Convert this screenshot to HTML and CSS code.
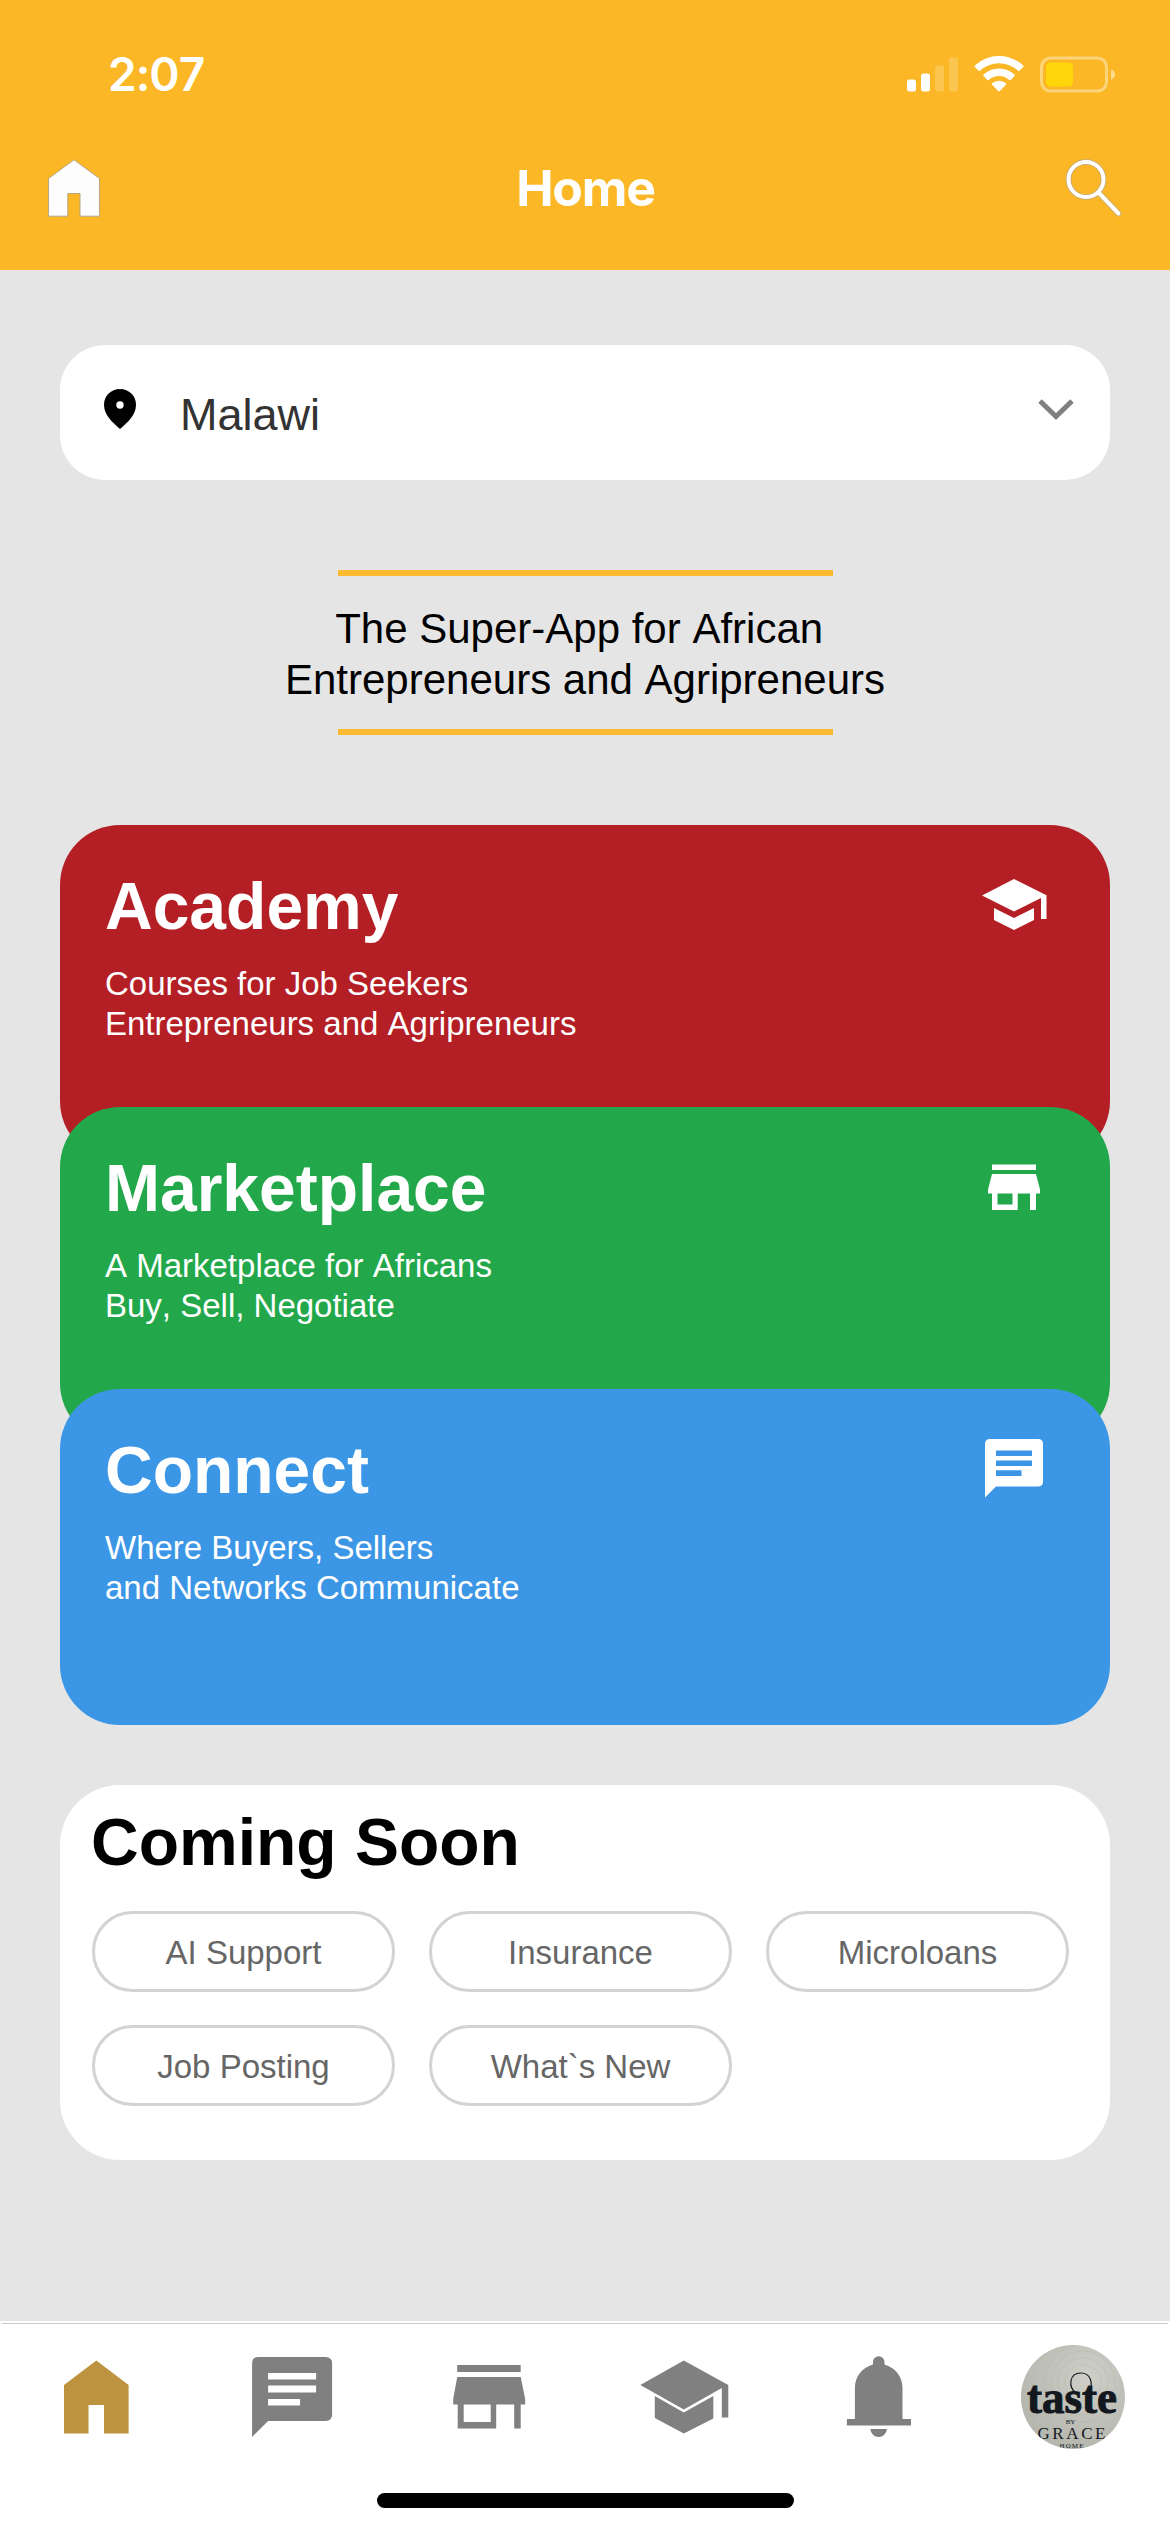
FILE: index.html
```
<!DOCTYPE html>
<html lang="en">
<head>
    <meta charset="UTF-8">
    <meta name="viewport" content="width=device-width, initial-scale=1.0">
    <title>Home</title>
    <link rel="stylesheet" href="styles.css">
</head>
<body>
    <header class="header">
        <div class="status-bar">
            <span class="time">2:07</span>
            <svg class="status-icons" width="208" height="37" viewBox="907 55.5 208 37">
                <g fill="#fff">
                    <rect x="907" y="79" width="9" height="12" rx="2.5"/>
                    <rect x="921" y="73" width="9" height="18" rx="2.5"/>
                    <rect x="935" y="65" width="9" height="26" rx="2.5" opacity="0.2"/>
                    <rect x="949" y="57" width="9" height="34" rx="2.5" opacity="0.2"/>
                    <path d="M999 55.5c9.3 0 17.800 3.600 24.200 9.500.5.5.5 1.100 0 1.600l-3.700 3.700c-.4.400-1 .4-1.500 0a28 28 0 0 0-38 0c-.5.4-1.100.4-1.500 0l-3.700-3.700c-.5-.5-.5-1.100 0-1.600a35.600 35.600 0 0 1 24.200-9.500z"/>
                    <path d="M999 68c6 0 11.400 2.300 15.500 6 .5.5.5 1.100 0 1.600l-3.800 3.800c-.4.400-1 .4-1.400 0a15.500 15.500 0 0 0-20.600 0c-.4.400-1 .4-1.400 0l-3.800-3.800c-.5-.5-.5-1.100 0-1.600a23 23 0 0 1 15.500-6z"/>
                    <path d="M999 80.300c2.600 0 5 .9 6.900 2.500.5.400.5 1 0 1.500l-6.100 6.200c-.5.500-1.100.5-1.600 0l-6.100-6.200c-.5-.5-.5-1.100 0-1.500a10.600 10.600 0 0 1 6.900-2.500z"/>
                    <path d="M1111 69c5.300 1.800 5.300 8.200 0 10z" opacity="0.5"/>
                </g>
                <rect x="1041.500" y="57.500" width="65" height="33" rx="9" fill="none" stroke="#fff" stroke-width="3" opacity="0.4"/>
                <rect x="1046" y="62" width="27" height="24" rx="4.500" fill="#ffd60a"/>
            </svg>
        </div>
        <div class="title-bar">
            <svg width="52" height="58" viewBox="0 0 52 58">
                <path d="M.5 19.500 26 .8l25.500 18.700v37.700H32V34.500H19.800v22.700H.5z" fill="#fdfdfd" stroke="#b9a684"/>
            </svg>
            <h1>Home</h1>
            <svg width="58" height="58" viewBox="0 0 58 58" fill="none" stroke-linecap="round">
                <g stroke="#c0a878" stroke-width="5.600">
                    <circle cx="22" cy="20.500" r="17.500"/>
                    <path d="M35 34l19.500 20.500"/>
                </g>
                <g stroke="#fff" stroke-width="4">
                    <circle cx="22" cy="20.500" r="17.500"/>
                    <path d="M35 34l19.500 20.500"/>
                </g>
            </svg>
        </div>
    </header>

    <main class="content">
        <div class="country">
            <svg width="32" height="40" viewBox="0 0 32 40">
                <path d="M16 0C7 0 0 6.800 0 15.800 0 26 8.500 33.500 16 40c7.500-6.500 16-14 16-24.200C32 6.800 25 0 16 0z"/>
                <circle cx="16" cy="16" r="3.700" fill="#fff"/>
            </svg>
            <span class="country-name">Malawi</span>
            <svg width="38" height="24" viewBox="0 0 38 24">
                <path d="M3 4l16 15.500L35 4" fill="none" stroke="#808080" stroke-width="5"/>
            </svg>
        </div>

        <div class="slogan">
            <p>The Super-App for African&nbsp;<br>Entrepreneurs and Agripreneurs</p>
        </div>

        <div class="cards">
            <section class="card academy">
                <div>
                    <h2>Academy</h2>
                    <p>Courses for Job Seekers<br>Entrepreneurs and Agripreneurs</p>
                </div>
                <svg class="card-icon" width="66" height="66" viewBox="981 872 66 66">
                    <path d="M982 895.500L1014 879l32.500 16.300V919h-5.500v-21l-27 13.500z"/>
                    <path d="M994 908l20 10 20-10v12l-20 10-20-10z"/>
                </svg>
            </section>
            <section class="card market">
                <div>
                    <h2>Marketplace</h2>
                    <p>A Marketplace for Africans<br>Buy, Sell, Negotiate</p>
                </div>
                <svg class="card-icon" width="66" height="66" viewBox="981 1154 66 66">
                    <path d="M992 1164.500h44v5.500h-44zM992 1174h44l4 15.500v4h-4v16.500h-6v-16.500h-12.300v16.500H992v-16.500h-4v-4zM997.500 1193.500v11h15v-11z" fill-rule="evenodd"/>
                </svg>
            </section>
            <section class="card connect">
                <div>
                    <h2>Connect</h2>
                    <p>Where Buyers, Sellers<br>and Networks Communicate</p>
                </div>
                <svg class="card-icon" width="66" height="66" viewBox="981 1436 66 66">
                    <path d="M990 1439h48q5 0 5 5v37.500q0 5-5 5h-42l-11 11V1444q0-5 5-5zM996 1450.500v5.500h36v-5.500zM996 1460.500v5.500h36v-5.500zM996 1470.300v5.700h25.500v-5.700z" fill-rule="evenodd"/>
                </svg>
            </section>
        </div>

        <section class="soon">
            <h2>Coming Soon</h2>
            <div class="pills">
                <span class="pill">AI Support</span>
                <span class="pill">Insurance</span>
                <span class="pill">Microloans</span>
                <span class="pill">Job Posting</span>
                <span class="pill">What`s New</span>
            </div>
        </section>
    </main>

    <nav class="nav">
        <div class="tabs">
            <svg class="tab active" viewBox="44 2345 104 104">
                <path d="M64 2385l32.300-24.500 32.300 24.500v48.500H104V2405H88.500v28.500H64z"/>
            </svg>
            <svg class="tab" viewBox="239.400 2345 104 104">
                <path d="M259 2357h67q6.500 0 6.500 6.500v51q0 6.500-6.500 6.500h-57.500l-16 16v-73.500q0-6.500 6.500-6.500zM268.500 2373v6.500h48v-6.500zM268.500 2385.500v7h48v-7zM268.500 2399v6.500h32v-6.500z" fill-rule="evenodd"/>
            </svg>
            <svg class="tab" viewBox="434.800 2345 104 104">
                <path d="M457 2365h63.500v7H457zM457 2377h63.500l4.500 22v5.500h-4.500v24H514v-24h-18v24h-38.500v-24H453v-5.500zM463.500 2404.500v17.500h27v-17.500z" fill-rule="evenodd"/>
            </svg>
            <svg class="tab" viewBox="630.200 2345 104 104">
                <path d="M640.500 2385l43.500-24.500 44.500 24.500v32.500H722V2388l-38 21.500z"/>
                <path d="M655 2396l29 16.500 29.500-16.500v22.500L684 2433.500l-29-15.500z"/>
            </svg>
            <svg class="tab" viewBox="825.600 2345 104 104">
                <path d="M846.500 2419h8V2388c0-11 7-20.500 18-23.500v-2.500a5.800 5.800 0 0 1 11.600 0v2.500c11 3 18 12.500 18 23.500v31h8.500v6.500h-64.100zM870 2429h16.500c-.5 4.500-4 8-8.200 8s-7.800-3.500-8.300-8z"/>
            </svg>
            <svg class="avatar" viewBox="0 0 104 104">
                <defs>
                    <clipPath id="round"><circle cx="52" cy="52" r="52"/></clipPath>
                    <radialGradient id="paper" cx="0.650" cy="0.300" r="0.800">
                        <stop offset="0" stop-color="#cfcfc8"/>
                        <stop offset="1" stop-color="#b2b3aa"/>
                    </radialGradient>
                </defs>
                <g clip-path="url(#round)">
                    <rect width="104" height="104" fill="url(#paper)"/>
                    <g fill="none" stroke="#aeb0a8" stroke-width="1" opacity="0.350">
                        <circle cx="62" cy="38" r="18"/>
                        <circle cx="62" cy="38" r="25"/>
                        <circle cx="62" cy="38" r="32"/>
                        <circle cx="62" cy="38" r="39"/>
                    </g>
                    <path d="M55 48c-8-6-7-20 5-20 10 0 12 10 9 20" fill="none" stroke="#161b20" stroke-width="1.200"/>
                    <g fill="#12181e" text-anchor="middle">
                        <text class="logo-big" x="51" y="68" textLength="90" lengthAdjust="spacingAndGlyphs">taste</text>
                        <text class="logo-tiny" x="49.500" y="79">BY</text>
                        <text class="logo-mid" x="50.500" y="93.500" textLength="68">GRACE</text>
                        <text class="logo-tiny" x="50.500" y="102.500" textLength="24">HOME</text>
                    </g>
                </g>
            </svg>
        </div>
        <div class="home-indicator"></div>
    </nav>
</body>
</html>
```
FILE: styles.css
```
* {
    box-sizing: border-box;
}
body {
    font-family: "Liberation Sans", Arial, sans-serif;
    font-kerning: none;
    background-color: #e5e5e5;
    margin: 0;
    width: 1170px;
    height: 2532px;
    display: flex;
    flex-direction: column;
    overflow: hidden;
}
h1, h2, p {
    margin: 0;
}
svg {
    display: block;
    flex-shrink: 0;
}
.header {
    height: 270px;
    background-color: #fbb725;
    color: #fff;
    font-family: Inter, sans-serif;
}
.status-bar {
    display: flex;
    justify-content: space-between;
    align-items: center;
    height: 148px;
    padding: 0 55px 0 108px;
}
.time {
    font-size: 46px;
    font-weight: 600;
    letter-spacing: -1px;
}
.title-bar {
    display: flex;
    justify-content: space-between;
    align-items: center;
    height: 80px;
    padding: 0 48px;
}
.title-bar h1 {
    margin-left: 7px;
    font-size: 50px;
    font-weight: 650;
    letter-spacing: -1.2px;
}
.content {
    flex: 1;
    padding: 75px 60px 0;
}
.country {
    display: flex;
    align-items: center;
    height: 135px;
    padding: 0 35px 7px 44px;
    background-color: #fff;
    border-radius: 45px;
}
.country-name {
    flex: 1;
    margin-left: 44px;
    padding-top: 11px;
    font-size: 45px;
    color: #333;
}
.slogan {
    width: 495px;
    height: 165px;
    margin: 90px auto;
    padding-top: 3px;
    border-top: 6px solid #fdb930;
    border-bottom: 6px solid #fdb930;
    display: flex;
    justify-content: center;
    align-items: center;
}
.slogan p {
    font-size: 42px;
    line-height: 51px;
    text-align: center;
    white-space: nowrap;
}
.card {
    display: flex;
    justify-content: space-between;
    height: 336px;
    padding: 43px 63px 0 45px;
    border-radius: 60px;
    color: #fff;
}
.card + .card {
    margin-top: -54px;
}
.academy {
    background-color: #b41e25;
}
.market {
    background-color: #22a84a;
}
.connect {
    background-color: #3c96e6;
}
.card h2 {
    font-size: 66px;
    line-height: 76px;
}
.card p {
    margin-top: 20px;
    font-size: 33px;
    line-height: 40px;
}
.card-icon {
    margin-top: 4px;
    fill: #fff;
}
.soon {
    height: 375px;
    margin-top: 60px;
    padding: 19px 31px 0;
    background-color: #fff;
    border-radius: 60px;
}
.soon h2 {
    font-size: 66px;
    line-height: 76px;
}
.pills {
    display: grid;
    grid-template-columns: repeat(3, 303px);
    gap: 33px 34px;
    margin: 31px 0 0 1px;
}
.pill {
    display: flex;
    justify-content: center;
    align-items: center;
    height: 81px;
    padding-top: 2px;
    border: 3px solid #d3d3d3;
    border-radius: 45px;
    font-size: 33px;
    color: #666;
}
.nav {
    height: 211px;
    background-color: #fff;
}
.tabs {
    display: flex;
    justify-content: space-between;
    height: 170px;
    margin: 0 2px;
    padding: 24px 43px 0 42px;
    background: linear-gradient(#c8c8c8, #c8c8c8) 0 2px / 100% 1px no-repeat;
}
.tab {
    width: 104px;
    height: 104px;
    fill: #808080;
}
.active {
    fill: #be9340;
}
.avatar {
    width: 104px;
    height: 104px;
}
.logo-big {
    font: bold 46px "Liberation Serif", serif;
    stroke: #12181e;
    stroke-width: 1px;
}
.logo-mid {
    font: 17px "Liberation Serif", serif;
}
.logo-tiny {
    font: 7px "Liberation Serif", serif;
}
.home-indicator {
    width: 417px;
    height: 15px;
    margin: 2px auto 0;
    border-radius: 8px;
    background-color: #000;
}
```
